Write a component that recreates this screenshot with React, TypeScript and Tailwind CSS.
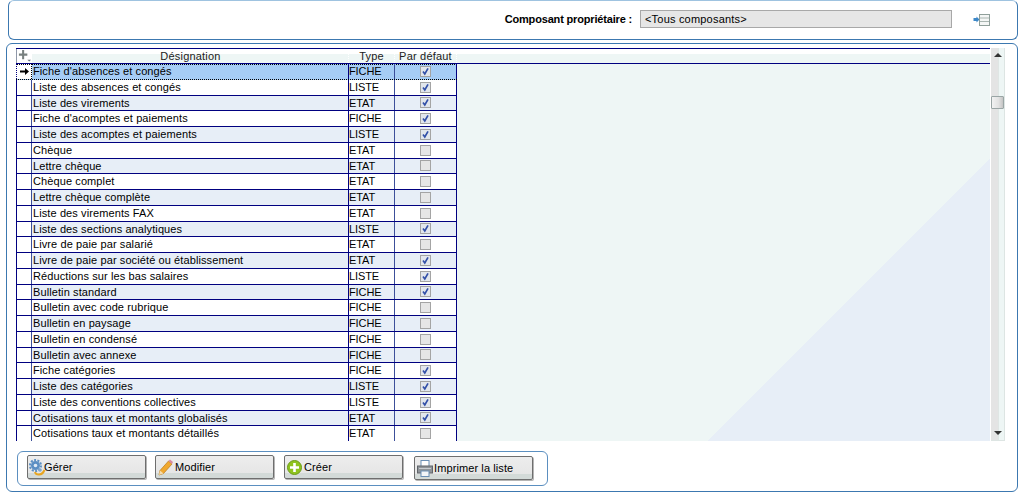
import React from "react";

type Row = [string, string, boolean];
const rows: Row[] = [
  ["Fiche d'absences et congés", "FICHE", true],
  ["Liste des absences et congés", "LISTE", true],
  ["Liste des virements", "ETAT", true],
  ["Fiche d'acomptes et paiements", "FICHE", true],
  ["Liste des acomptes et paiements", "LISTE", true],
  ["Chèque", "ETAT", false],
  ["Lettre chèque", "ETAT", false],
  ["Chèque complet", "ETAT", false],
  ["Lettre chèque complète", "ETAT", false],
  ["Liste des virements FAX", "ETAT", false],
  ["Liste des sections analytiques", "LISTE", true],
  ["Livre de paie par salarié", "ETAT", false],
  ["Livre de paie par société ou établissement", "ETAT", true],
  ["Réductions sur les bas salaires", "LISTE", true],
  ["Bulletin standard", "FICHE", true],
  ["Bulletin avec code rubrique", "FICHE", false],
  ["Bulletin en paysage", "FICHE", false],
  ["Bulletin en condensé", "FICHE", false],
  ["Bulletin avec annexe", "FICHE", false],
  ["Fiche catégories", "FICHE", true],
  ["Liste des catégories", "LISTE", true],
  ["Liste des conventions collectives", "LISTE", true],
  ["Cotisations taux et montants globalisés", "ETAT", true],
  ["Cotisations taux et montants détaillés", "ETAT", false],
];

function Check({ on }: { on: boolean }) {
  return (
    <svg width="11" height="11" viewBox="0 0 11 11" className="block">
      <rect x="0.5" y="0.5" width="10" height="10" fill={on ? "#e2e6ec" : "#e6e6e6"} stroke="#a4a4a4" />
      {on && <path d="M3 5.5 L4.8 8 L8 2.4" fill="none" stroke="#3350a8" strokeWidth="1.7" />}
    </svg>
  );
}

function Gear() {
  return (
    <svg width="17" height="17" viewBox="0 0 17 17">
      <circle cx="6.5" cy="6.5" r="4.5" fill="#5b8fc4" />
      <circle cx="6.5" cy="6.5" r="5.5" fill="none" stroke="#5b8fc4" strokeWidth="2" strokeDasharray="2 1.4" />
      <circle cx="6.5" cy="6.5" r="1.8" fill="#dfeaf5" />
      <circle cx="11" cy="11" r="1.8" fill="#7ea7d0" />
      <path d="M6 13 C7 16.5 13 17 15.5 11" fill="none" stroke="#e8a520" strokeWidth="2" />
    </svg>
  );
}

function Pencil() {
  return (
    <svg width="15" height="17" viewBox="0 0 15 17">
      <path d="M1 16 L2 11.5 L10.5 2 L14 5 L5.5 14.5 Z" fill="#f0a830" stroke="#b87818" strokeWidth="0.7" />
      <path d="M10.5 2 L12 0.5 L15 3 L14 5 Z" fill="#d98aa0" />
      <path d="M1 16 L2 11.5 L5.5 14.5 Z" fill="#f3dcb0" />
    </svg>
  );
}

function PlusIcon() {
  return (
    <svg width="15" height="15" viewBox="0 0 15 15">
      <circle cx="7.5" cy="7.5" r="7" fill="#8fc31f" stroke="#6c9a18" />
      <path d="M7.5 3 V12 M3 7.5 H12" stroke="#ffffff" strokeWidth="2.6" />
    </svg>
  );
}

function Printer() {
  return (
    <svg width="16" height="17" viewBox="0 0 16 17">
      <rect x="4" y="0.5" width="8" height="6" fill="#ffffff" stroke="#6a8fb5" />
      <rect x="0.5" y="6" width="15" height="7" fill="#8f9499" stroke="#60656a" />
      <rect x="2" y="8" width="12" height="1" fill="#c8ccd0" />
      <rect x="4" y="11" width="8" height="5.5" fill="#f2f5f8" stroke="#6a8fb5" />
    </svg>
  );
}

function Btn({ icon, label, cls }: { icon: React.ReactNode; label: string; cls: string }) {
  return (
    <button
      className={`flex h-[24px] w-[119px] items-center rounded-[2px] border border-[#6e6e6e] bg-[linear-gradient(#ededed_0,#e6e6e6_17px,#d3dad8_17px)] text-[11px] leading-none text-black shadow-[1px_1px_0_#b5b5b5] ${cls}`}
    >
      {icon}
      <span className="tracking-[0.1px]">{label}</span>
    </button>
  );
}

export default function App() {
  return (
    <div className="flex h-[494px] w-[1022px] flex-col overflow-hidden bg-white font-['Liberation_Sans',Arial,sans-serif] text-[11px] text-black">
      <div className="ml-[8px] mr-[4px] flex h-[40px] items-start rounded-[6px] border border-[#3c78b0] border-t-[#9fc3e0] pt-[9px]">
        <div className="ml-auto flex items-center">
          <span className="mr-[8px] text-[11px] leading-[18px] font-bold tracking-[-0.17px]">Composant propriétaire :</span>
          <div className="flex h-[18px] w-[312px] items-center border border-[#a8a8a8] bg-[#e6e6e6] pl-[4px] text-[11px] tracking-[0.2px]">
            {"<Tous composants>"}
          </div>
          <svg width="17" height="13" viewBox="0 0 17 13" className="mr-[27px] ml-[21px]">
            <path d="M6.5 6.5 L3.5 3.5 V5 H0.5 V8 H3.5 V9.5 Z" fill="#3d88c8" />
            <rect x="6.5" y="1.5" width="10" height="11" fill="#f4f6f5" stroke="#8f9f9a" />
            <path d="M7 5 H16 M7 8.5 H16" stroke="#a9b5b1" />
          </svg>
        </div>
      </div>

      <div className="mt-[3px] mr-[4px] ml-[6px] flex h-[449px] flex-col rounded-[6px] border border-[#3c78b0]">
        <div className="mt-[4px] ml-[9px] flex h-[393px] w-[989px]">
          <div className="flex h-full w-[975px] flex-col overflow-hidden">
            <div className="flex h-[16px] border-t border-b border-[#000080] bg-[linear-gradient(#ffffff_5px,#eef6f5_5px)] text-[11px] leading-[15px] tracking-[0.2px] text-[#222]">
              <div className="flex w-[16px] items-start border-l border-[#8f98a8] bg-white pl-[1px]">
                <svg width="15" height="14" viewBox="0 0 15 14">
                  <path d="M5.5 0.5 V10.5 M1 5.5 H10" stroke="#78807f" strokeWidth="2.2" />
                  <path d="M10 11 H14 L12 13 Z" fill="#707a7a" />
                </svg>
              </div>
              <div className="w-[316px] pl-[1px] text-center">Désignation</div>
              <div className="w-[46px] border-l border-dotted border-white text-center">Type</div>
              <div className="w-[63px] border-x border-dotted border-white text-center">Par défaut</div>
            </div>
            <div className="flex min-h-0 flex-1">
              <div className="w-[441px] shrink-0">
                {rows.map(([name, type, on], i) => {
                  const sel = i === 0;
                  const dots = "bg-[repeating-linear-gradient(90deg,#000_0_1px,transparent_1px_2px)] bg-[length:100%_1px] bg-no-repeat";
                  const bg = sel ? `bg-[#a6cdf5] ${dots}` : i % 2 === 0 ? "bg-[#e7eef7]" : "bg-white";
                  const edge = sel
                    ? "border-b border-dotted border-black"
                    : "border-b border-[#000080]";
                  return (
                    <div key={name} className={`flex h-[15.75px] leading-[15.5px] tracking-[0.1px] ${bg} ${edge}`}>
                      <div
                        className={`flex w-[16px] shrink-0 items-center justify-center border-l border-[#000080] bg-white ${sel ? `border-r border-dotted border-r-black ${dots}` : "border-r border-r-[#3c4f9a]"}`}
                      >
                        {sel && (
                          <svg width="9" height="9" viewBox="0 0 9 9">
                            <path d="M0 3.5 H5 V1 L9 4.5 L5 8 V5.5 H0 Z" fill="#000" />
                          </svg>
                        )}
                      </div>
                      <div className="w-[316px] shrink-0 overflow-hidden pl-[1px] whitespace-nowrap">{name}</div>
                      <div className="w-[46px] shrink-0 border-l border-[#000080] tracking-[-0.1px]">{type}</div>
                      <div className="flex w-[63px] shrink-0 items-center justify-center border-x border-x-[#000080] border-l-[#3c4f9a]">
                        <Check on={on} />
                      </div>
                    </div>
                  );
                })}
              </div>
              <div className="flex-1 bg-[linear-gradient(135deg,#eef6f5_444px,#e7eef7_444px)]" />
            </div>
          </div>
          <div className="ml-[1px] flex w-[14px] flex-col items-center border-r border-b border-[#dde5e3] bg-[linear-gradient(90deg,#e4e4e4_7px,#dfe6e4_7px,#dfe6e4_8px,#eef6f5_8px)]">
            <svg width="8" height="4" viewBox="0 0 8 4" className="mt-[5px]">
              <path d="M0 4 L4 0 L8 4 Z" fill="#333" />
            </svg>
            <div className="mt-[39px] h-[13px] w-[13px] shrink-0 rounded-[1px] border border-[#9aa5a5] bg-[linear-gradient(90deg,#f2f2f2,#e2e2e2_60%,#c4c4c4)]" />
            <div className="flex-1" />
            <svg width="8" height="4" viewBox="0 0 8 4" className="mb-[5px]">
              <path d="M0 0 L8 0 L4 4 Z" fill="#333" />
            </svg>
          </div>
        </div>

        <div className="mt-[10px] ml-[10px] flex h-[35px] w-[531px] items-start rounded-[6px] border border-[#5b8fc0] pt-[3px] pl-[9px]">
          <Btn icon={<Gear />} label="Gérer" cls="gap-0 pl-[1px] [&>svg]:mr-[-2px]" />
          <Btn icon={<Pencil />} label="Modifier" cls="ml-[9px] gap-[2px] pl-[2px]" />
          <Btn icon={<PlusIcon />} label="Créer" cls="ml-[10px] gap-[2px] pl-[2px]" />
          <Btn icon={<Printer />} label="Imprimer la liste" cls="mt-[1px] ml-[11px] gap-[1px] pl-[2px]" />
        </div>
      </div>
    </div>
  );
}
